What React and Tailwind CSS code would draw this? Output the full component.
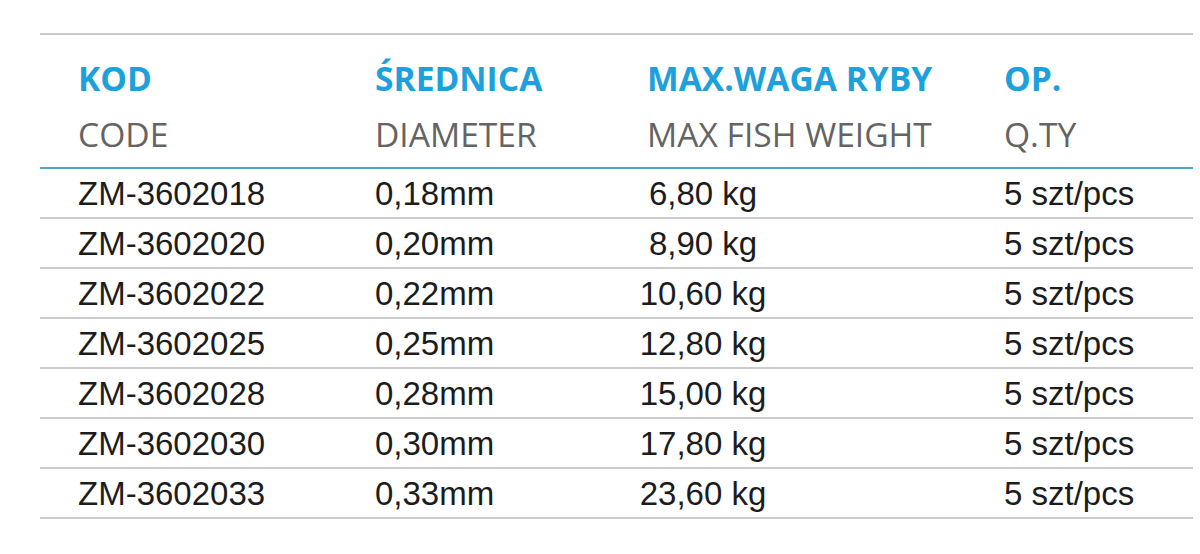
export default function App() {
  const rows = [
    ["ZM-3602018", "0,18mm", "6,80 kg"],
    ["ZM-3602020", "0,20mm", "8,90 kg"],
    ["ZM-3602022", "0,22mm", "10,60 kg"],
    ["ZM-3602025", "0,25mm", "12,80 kg"],
    ["ZM-3602028", "0,28mm", "15,00 kg"],
    ["ZM-3602030", "0,30mm", "17,80 kg"],
    ["ZM-3602033", "0,33mm", "23,60 kg"],
  ];
  const cols = "grid grid-cols-[297px_272px_357px_1fr] pl-[38px]";
  return (
    <div className="w-[1200px] h-[554px] bg-white pt-[33px] overflow-hidden">
      <div className="ml-[40px] w-[1153px] border-t-2 border-[#c9c9c9]">
        <div
          className={`${cols} pt-[15px] pb-[5px] text-[33.6px] leading-[56px] whitespace-nowrap`}
          style={{ fontFamily: '"Open Sans", sans-serif' }}
        >
          <div>
            <div className="font-bold text-[#1da1dc]">KOD</div>
            <div className="text-[#646464]">CODE</div>
          </div>
          <div>
            <div className="font-bold text-[#1da1dc]">ŚREDNICA</div>
            <div className="text-[#646464]">DIAMETER</div>
          </div>
          <div>
            <div className="font-bold text-[#1da1dc]">MAX.WAGA RYBY</div>
            <div className="text-[#646464]">MAX FISH WEIGHT</div>
          </div>
          <div>
            <div className="font-bold text-[#1da1dc]">OP.</div>
            <div className="text-[#646464]">Q.TY</div>
          </div>
        </div>
        <div className="border-t-2 border-[#4fa6c9]">
          {rows.map((r) => (
            <div
              key={r[0]}
              className={`${cols} h-[50px] items-center border-b-2 border-[#cbcbcb] text-[33px] leading-none text-[#1c1c1c] whitespace-nowrap`}
              style={{ fontFamily: '"Liberation Sans", Arial, sans-serif' }}
            >
              <div>{r[0]}</div>
              <div>{r[1]}</div>
              <div className="w-[112px] flex justify-center">
                <span>{r[2]}</span>
              </div>
              <div>5 szt/pcs</div>
            </div>
          ))}
        </div>
      </div>
    </div>
  );
}
